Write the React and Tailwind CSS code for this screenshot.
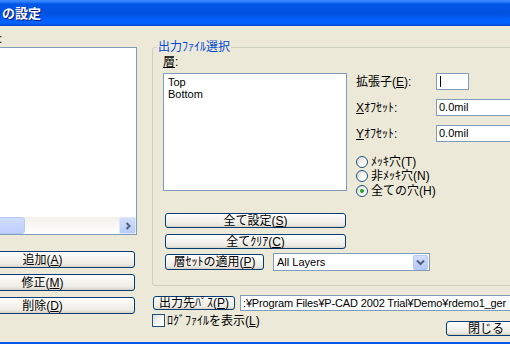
import React from "react";

const F = "font-['Liberation_Sans','Noto_Sans_CJK_JP',sans-serif]";

function Btn({ className = "", children }) {
  return (
    <div
      className={
        "flex shrink-0 items-center justify-center rounded-[3px] border border-[#003c74] bg-[linear-gradient(to_bottom,#ffffff,#f5f4ef_40%,#ecebe4_80%,#d6d2c6)] text-[12px] leading-none text-black " +
        className
      }
    >
      {children}
    </div>
  );
}

function Radio({ checked, children, className = "" }) {
  return (
    <div className={"flex items-center gap-[3px] " + className}>
      <div className="flex h-[12px] w-[12px] shrink-0 items-center justify-center rounded-full border border-[#1c5180] bg-[linear-gradient(135deg,#dcdad0,#ffffff_70%)]">
        {checked && <div className="h-[4px] w-[4px] rounded-full bg-[#21a121]" />}
      </div>
      <span className="whitespace-nowrap text-[12px] leading-none">{children}</span>
    </div>
  );
}

function Field({ className = "", children }) {
  return (
    <div
      className={
        "flex shrink-0 items-center border border-[#7f9db9] bg-white pl-[2px] text-[11px] leading-none " +
        className
      }
    >
      {children}
    </div>
  );
}

export default function App() {
  return (
    <div className={"flex h-[344px] w-[510px] flex-col overflow-hidden bg-[#ece9d8] text-black " + F}>
      {/* title bar */}
      <div className="flex h-[26px] shrink-0 items-center bg-[linear-gradient(to_bottom,#3d8eff_0px,#2a7bff_2px,#0056e6_4px,#0053e0_55%,#005cfa_70%,#0063ff_88%,#0052e6_96%,#0040c8_100%)] pl-[2px]">
        <span className="text-[13px] font-bold leading-none text-white [text-shadow:1px_1px_#0a1883]">
          の設定
        </span>
      </div>

      {/* body */}
      <div className="flex flex-1 items-start">
        {/* left column (cropped) */}
        <div className="-ml-[50px] flex w-[187px] shrink-0 flex-col">
          <div className="mt-[6px] h-[14px] pl-[49px] text-[12px] leading-[14px]">:</div>
          <div className="mt-[1px] flex h-[188px] flex-col justify-end border border-[#7f9db9] bg-white">
            <div className="flex h-[17px] items-stretch bg-[linear-gradient(to_bottom,#f3f1ec,#fefefb)]">
              <div className="w-[74px] rounded-[3px] border border-[#b6c9f4] bg-[linear-gradient(to_bottom,#cfdcfd,#bccffb)]" />
              <div className="flex-1" />
              <div className="flex w-[17px] items-center justify-center rounded-[2px] border border-[#e0e8fd] bg-[linear-gradient(to_bottom,#d2defc,#b8cbf8)]">
                <svg width="8" height="8" viewBox="0 0 8 8">
                  <path d="M2.5 1 L5.5 4 L2.5 7" fill="none" stroke="#4d6185" strokeWidth="2" />
                </svg>
              </div>
            </div>
          </div>
          <Btn className="mt-[16px] h-[17px] w-[185px]">
            追加(<u>A</u>)
          </Btn>
          <Btn className="mt-[6px] h-[17px] w-[185px]">
            修正(<u>M</u>)
          </Btn>
          <Btn className="mt-[6px] h-[17px] w-[185px]">
            削除(<u>D</u>)
          </Btn>
        </div>

        {/* right column */}
        <div className="ml-[15px] flex w-[420px] shrink-0 flex-col pt-[14px]">
          <fieldset className="rounded-[3px] border border-[#d0d0bf]">
            <legend className="ml-[4px] px-[1px] text-[12px] leading-[14px] text-[#0046d5]">
              出力ﾌｧｲﾙ選択
            </legend>
            <div className="flex h-[231px]">
              {/* layer list side */}
              <div className="flex w-[194px] shrink-0 flex-col pl-[10px]">
                <div className="mt-[1px] h-[14px] text-[12px] leading-[14px]">
                  <u>層</u>:
                </div>
                <div className="mt-[4px] h-[118px] w-[184px] border border-[#7f9db9] bg-white pl-[4px] pt-[2px] text-[11px] leading-[12px]">
                  <div>Top</div>
                  <div>Bottom</div>
                </div>
                <Btn className="ml-[2px] mt-[22px] h-[15px] w-[181px]">
                  全て設定(<u>S</u>)
                </Btn>
                <Btn className="ml-[2px] mt-[6px] h-[15px] w-[181px]">
                  全てｸﾘｱ(<u>C</u>)
                </Btn>
                <div className="mt-[4px] flex h-[18px] w-[270px] items-center">
                  <Btn className="ml-[2px] h-[16px] w-[99px]">
                    層ｾｯﾄの適用(<u>P</u>)
                  </Btn>
                  <div className="ml-[9px] flex h-[18px] w-[157px] shrink-0 items-center justify-between border border-[#7f9db9] bg-white pl-[3px] pr-[1px]">
                    <span className="text-[11px] leading-none">All Layers</span>
                    <div className="flex h-[15px] w-[15px] items-center justify-center rounded-[2px] border border-[#b6c9f4] bg-[linear-gradient(to_bottom,#d2defc,#b5c8f7)]">
                      <svg width="9" height="7" viewBox="0 0 9 7">
                        <path d="M1 1.5 L4.5 5 L8 1.5" fill="none" stroke="#4d6185" strokeWidth="2" />
                      </svg>
                    </div>
                  </div>
                </div>
              </div>

              {/* settings side */}
              <div className="ml-[9px] flex shrink-0 flex-col">
                <div className="mt-[19px] flex h-[17px] items-center">
                  <span className="w-[80px] text-[12px] leading-none">
                    拡張子(<u>E</u>):
                  </span>
                  <Field className="h-[17px] w-[33px]">
                    <span className="ml-[1px] h-[11px] w-[1px] bg-black" />
                  </Field>
                </div>
                <div className="mt-[9px] flex h-[17px] items-center">
                  <span className="w-[80px] text-[12px] leading-none">
                    <u>X</u>ｵﾌｾｯﾄ:
                  </span>
                  <Field className="h-[17px] w-[100px]">0.0mil</Field>
                </div>
                <div className="mt-[9px] flex h-[17px] items-center">
                  <span className="w-[80px] text-[12px] leading-none">
                    <u>Y</u>ｵﾌｾｯﾄ:
                  </span>
                  <Field className="h-[17px] w-[100px]">0.0mil</Field>
                </div>
                <Radio className="mt-[12px] h-[15px]">ﾒｯｷ穴(T)</Radio>
                <Radio className="h-[14px]">非ﾒｯｷ穴(N)</Radio>
                <Radio className="h-[15px]" checked>
                  全ての穴(H)
                </Radio>
              </div>
            </div>
          </fieldset>

          {/* output path row */}
          <div className="mt-[9px] flex h-[16px] items-center">
            <Btn className="ml-[1px] h-[14px] w-[82px]">
              出力先ﾊﾟｽ(<u>P</u>)
            </Btn>
            <Field className="ml-[5px] h-[16px] w-[300px] whitespace-nowrap tracking-[-0.15px]">
              :¥Program Files¥P-CAD 2002 Trial¥Demo¥rdemo1_ger
            </Field>
          </div>

          {/* log checkbox + close */}
          <div className="mt-[3px] flex items-start">
            <div className="flex w-[294px] shrink-0 items-center">
              <div className="h-[13px] w-[13px] border border-[#1c5180] bg-[linear-gradient(135deg,#dcdad0,#ffffff_70%)]" />
              <span className="ml-[2px] text-[12px] leading-none">
                ﾛｸﾞﾌｧｲﾙを表示(<u>L</u>)
              </span>
            </div>
            <Btn className="mt-[7px] h-[15px] w-[80px]">閉じる</Btn>
          </div>
        </div>
      </div>

      <div className="h-[2px] shrink-0 bg-[#0055ea]" />
    </div>
  );
}
